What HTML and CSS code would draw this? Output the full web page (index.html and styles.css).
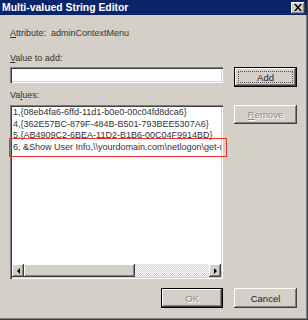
FILE: index.html
```html
<!DOCTYPE html>
<html>
<head>
<meta charset="utf-8">
<link rel="stylesheet" href="styles.css">
</head>
<body>
<div class="window">
  <div class="titlebar">
    <span class="title">Multi-valued String Editor</span>
    <span class="close"><svg width="8" height="7" viewBox="0 0 8 7"><path d="M0 0h2l2 2.5L6 0h2L5 3.5 8 7H6L4 4.5 2 7H0l3-3.5z" fill="#000"/></svg></span>
  </div>
  <div class="body">
    <div class="attr"><u>A</u>ttribute:&nbsp;&nbsp;adminContextMenu</div>
    <div class="label first"><u>V</u>alue to add:</div>
    <div class="row">
      <div class="input"></div>
      <div class="btn default focus">Add</div>
    </div>
    <div class="label second">Va<u>l</u>ues:</div>
    <div class="row list-row">
      <div class="listbox">
        <div class="items">
          <div>1,{08eb4fa6-6ffd-11d1-b0e0-00c04fd8dca6}</div>
          <div>4,{362E57BC-879F-484B-B501-793BEE5307A6}</div>
          <div>5,{AB4909C2-6BEA-11D2-B1B6-00C04F9914BD}</div>
          <div>6, &amp;Show User Info,\\yourdomain.com\netlogon\get-userinfo.hta</div>
        </div>
        <div class="hscroll">
          <div class="arrow"><span class="tri left"></span></div>
          <div class="thumb"></div>
          <div class="track"></div>
          <div class="arrow"><span class="tri right"></span></div>
        </div>
      </div>
      <div class="btn disabled"><span><u>R</u>emove</span></div>
    </div>
    <div class="footer">
      <div class="btn default disabled ok">OK</div>
      <div class="btn">Cancel</div>
    </div>
  </div>
  <div class="annot"></div>
</div>
</body>
</html>
```

FILE: styles.css
```css
body {
  margin: 0;
}
.window {
  position: relative;
  width: 308px;
  height: 320px;
  box-sizing: border-box;
  background: #d4d0c8;
  border-right: 1px solid #404040;
  border-bottom: 1px solid #404040;
  box-shadow: inset -1px -1px #808080;
  font: 9px "Liberation Sans", Arial, sans-serif;
  color: #333;
  display: flex;
  flex-direction: column;
}
.titlebar {
  height: 15px;
  background: #0a246a;
  display: flex;
  align-items: center;
  justify-content: space-between;
  padding: 0 2px 0 2px;
}
.title {
  color: #fff;
  font-weight: bold;
  font-size: 10.4px;
}
.close {
  width: 14px;
  height: 12px;
  box-sizing: border-box;
  background: #d4d0c8;
  box-shadow: inset -1px -1px #404040, inset 1px 1px #fff, inset -2px -2px #808080;
  display: flex;
  align-items: center;
  justify-content: center;
}
.body {
  padding: 12px 10px 0 10px;
  display: flex;
  flex-direction: column;
}
.attr, .label {
  height: 13px;
  line-height: 13px;
}
.label.first {
  margin-top: 12px;
}
.label.second {
  margin-top: 2px;
}
.row {
  display: flex;
  gap: 11px;
  margin-top: 2px;
  align-items: flex-start;
}
.list-row {
  margin-top: 3px;
}
.input {
  width: 213px;
  height: 16px;
  box-sizing: border-box;
  background: #fff;
  box-shadow: inset 1px 1px #808080, inset 2px 2px #404040, inset -1px -1px #fff, inset -2px -2px #d4d0c8;
}
.btn {
  width: 63px;
  height: 20px;
  box-sizing: border-box;
  display: flex;
  align-items: center;
  justify-content: center;
  color: #222;
  font-size: 9.5px;
  box-shadow: inset -1px -1px #404040, inset 1px 1px #fff, inset -2px -2px #808080, inset 2px 2px #d4d0c8;
}
.btn.default {
  border: 1px solid #000;
}
.btn.focus {
  outline: 1px dotted #555;
  outline-offset: -5px;
}
.btn.disabled {
  color: #8a8a8a;
  text-shadow: 1px 1px #fff;
}
.list-row .btn {
  height: 19px;
}
.listbox {
  width: 213px;
  height: 174px;
  box-sizing: border-box;
  background: #fff;
  padding: 2px;
  box-shadow: inset 1px 1px #808080, inset 2px 2px #404040, inset -1px -1px #fff, inset -2px -2px #d4d0c8;
  display: flex;
  flex-direction: column;
}
.items {
  flex: 1;
  overflow: hidden;
  white-space: nowrap;
  padding-left: 1px;
  line-height: 11.5px;
}
.hscroll {
  height: 13px;
  display: flex;
}
.arrow, .thumb {
  background: #d4d0c8;
  box-shadow: inset -1px -1px #404040, inset 1px 1px #fff, inset -2px -2px #808080;
  display: flex;
  align-items: center;
  justify-content: center;
}
.arrow {
  width: 12px;
}
.thumb {
  width: 111px;
}
.track {
  flex: 1;
  background: repeating-conic-gradient(#fff 0 25%, #d4d0c8 0 50%) 0 0 / 2px 2px;
}
.tri {
  width: 0;
  height: 0;
  border-top: 3px solid transparent;
  border-bottom: 3px solid transparent;
}
.tri.left {
  border-right: 3px solid #000;
}
.tri.right {
  border-left: 3px solid #000;
}
.footer {
  display: flex;
  justify-content: flex-end;
  gap: 11px;
  margin-top: 9px;
}
.footer .ok {
  width: 62px;
}
.annot {
  position: absolute;
  left: 9px;
  top: 138px;
  width: 218px;
  height: 19px;
  box-sizing: border-box;
  border: 1px solid #e8332e;
}
```
